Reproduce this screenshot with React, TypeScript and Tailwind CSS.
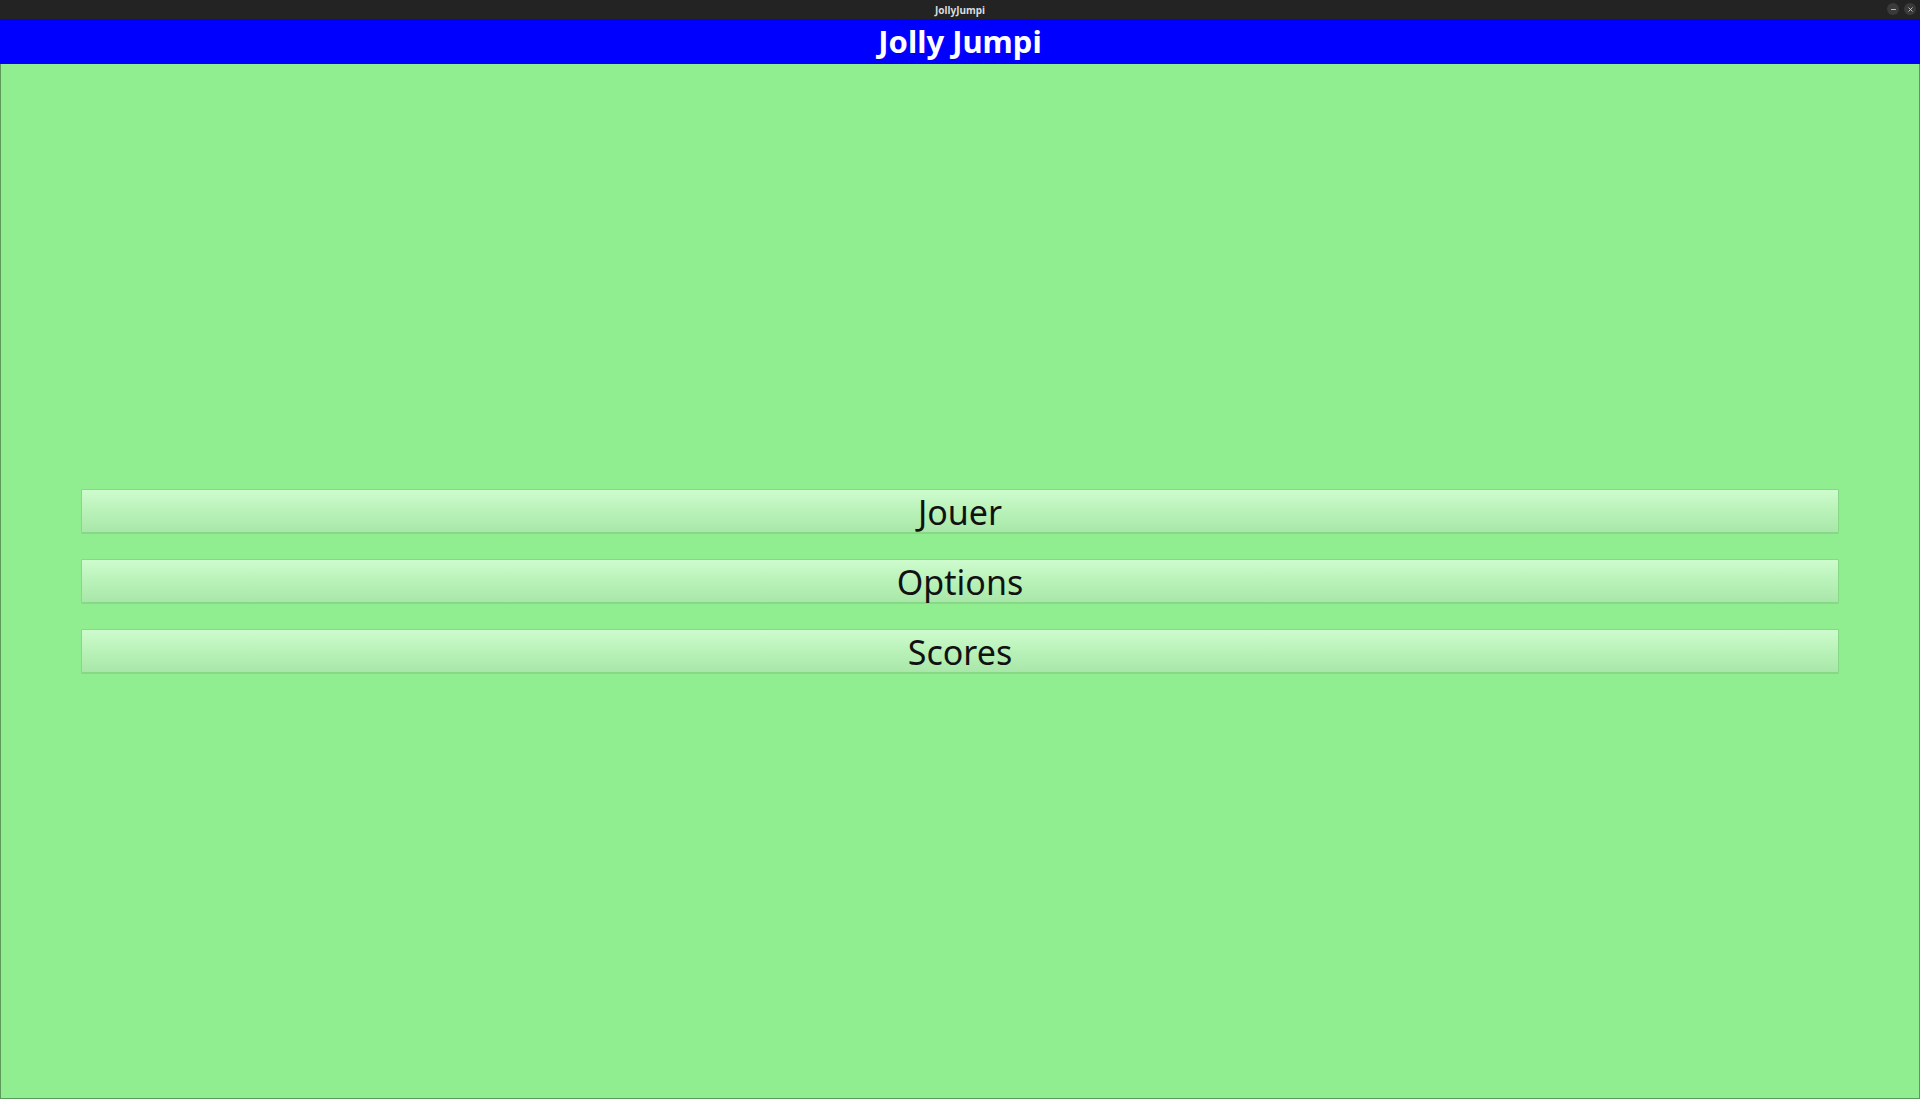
import { X, Minus } from "lucide-react";

const menuItems = ["Jouer", "Options", "Scores"];

export default function App() {
  return (
    <div
      className="flex flex-col w-screen h-screen overflow-hidden bg-[#232323]"
      style={{ fontFamily: '"Noto Sans", "Open Sans", sans-serif' }}
    >
      {/* Window title bar */}
      <div className="relative h-[19px] shrink-0 flex items-center justify-center bg-[#232323] rounded-tl-[4px] rounded-tr-[4px]">
        <span className="text-[10px] font-bold text-[#dcdcdc] leading-none">
          JollyJumpi
        </span>
        <div className="absolute right-[4px] top-[3px] flex gap-[5px]">
          <span className="w-[12px] h-[12px] rounded-full bg-[#3a3a3a] flex items-center justify-center text-[#cfcfcf]">
            <Minus className="w-[7px] h-[7px]" strokeWidth={3} />
          </span>
          <span className="w-[12px] h-[12px] rounded-full bg-[#3a3a3a] flex items-center justify-center text-[#cfcfcf]">
            <X className="w-[7px] h-[7px]" strokeWidth={3} />
          </span>
        </div>
      </div>

      {/* App body */}
      <div className="flex-1 flex flex-col border-x border-b border-[#5c9a5c] bg-[#90ee90]">
        <header className="h-[45px] shrink-0 -mx-px flex items-center justify-center bg-[#0000ff]">
          <h1 className="text-[31px] font-bold text-white leading-none pb-[1px]">
            Jolly Jumpi
          </h1>
        </header>

        <main className="flex-1 flex flex-col justify-center gap-[26px] px-[80px]">
          {menuItems.map((item) => (
            <button
              key={item}
              className="h-[44px] w-full flex items-center justify-center border border-[#86d886] rounded-[1px] bg-gradient-to-b from-[#cefbce] via-[#b9f2b9] to-[#a9e7a9] shadow-[0_1px_0_rgba(0,0,0,0.08)] text-[34px] text-[#111] leading-none pt-[1px]"
            >
              {item}
            </button>
          ))}
        </main>
      </div>
    </div>
  );
}
